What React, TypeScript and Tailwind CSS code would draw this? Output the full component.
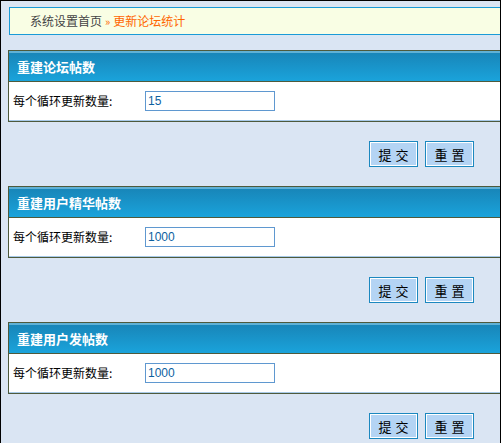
import React from "react";

const sections = [
  { id: "forum", title: "重建论坛帖数", value: "15" },
  { id: "digest", title: "重建用户精华帖数", value: "1000" },
  { id: "posts", title: "重建用户发帖数", value: "1000" },
];

const FormButton: React.FC<{ label: string }> = ({ label }) => (
  <button
    type="button"
    className="w-[49px] h-[26px] border border-[#1c88bf] bg-[#b4d4f4] shadow-[inset_0_0_0_1px_#ffffff] text-[13px] leading-none tracking-[4px] pl-[4px] text-black"
  >
    {label}
  </button>
);

const App: React.FC = () => {
  return (
    <div
      className="w-[501px] h-[443px] overflow-hidden border-x border-t border-black bg-[#dae5f3]"
      style={{ fontFamily: '"Noto Sans CJK SC", "Liberation Sans", sans-serif' }}
    >
      <div className="pl-[7px] pt-[6px]">
        {/* breadcrumb */}
        <div className="ml-px -mr-4 h-[28px] flex items-center pl-5 border border-[#1a9bd7] bg-[#f9fee4] text-[12px]">
          <span className="text-[#444444]">系统设置首页</span>
          <span className="text-[#ff6600] mx-[3px] text-[11px]">»</span>
          <span className="text-[#ff6600]">更新论坛统计</span>
        </div>

        {sections.map((s, i) => (
          <div key={s.id} className={i === 0 ? "mt-[15px]" : "mt-[19px]"}>
            <div className="-mr-4 border border-[#4e5a3c]">
              <div className="h-[30px] border-t-2 border-[#5fb1d6] bg-linear-to-b from-[#1886b9] to-[#1aa3db] flex items-center pl-2">
                <span className="text-white text-[13px] font-bold">{s.title}</span>
              </div>
              <div className="border-t border-[#4e5a3c] h-[40px] bg-white border-b border-b-[#a8cae8] flex items-center pl-1">
                <span className="w-[132px] text-[12px] text-black">每个循环更新数量:</span>
                <input
                  readOnly
                  value={s.value}
                  className="w-[130px] h-[20px] border border-[#5f98d0] bg-white px-[2px] text-[12px] text-[#0d5f9f] outline-none"
                  style={{ fontFamily: '"Liberation Sans", sans-serif' }}
                />
              </div>
            </div>
            <div className="mt-[19px] flex justify-end gap-[7px] pr-[26px]">
              <FormButton label="提交" />
              <FormButton label="重置" />
            </div>
          </div>
        ))}
      </div>
    </div>
  );
};

export default App;
